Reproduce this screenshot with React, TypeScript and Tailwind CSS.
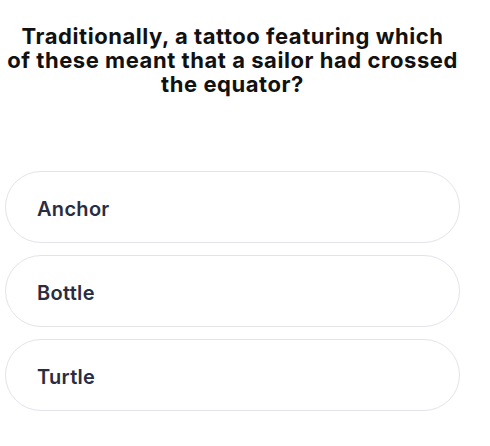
const options = ["Anchor", "Bottle", "Turtle"];

export default function App() {
  return (
    <div className="min-h-screen w-full bg-white" style={{ fontFamily: "Inter, 'Noto Sans', sans-serif" }}>
      <div className="w-[465px] flex flex-col items-center px-[5px]">
        <h1 className="pt-[24px] text-center text-[22px] leading-[24px] font-bold text-[#111111] tracking-[0.55px] whitespace-nowrap">
          Traditionally, a tattoo featuring which
          <br />
          of these meant that a sailor had crossed
          <br />
          the equator?
        </h1>
        <div className="mt-[75px] w-full flex flex-col gap-3">
          {options.map((opt) => (
            <button
              key={opt}
              className="h-[72px] w-full rounded-full border border-[#e3e3ec] bg-white text-left pl-[31px] pt-[3px] text-[20px] font-semibold tracking-[0.3px] text-[#2b2c3f]"
            >
              {opt}
            </button>
          ))}
        </div>
      </div>
    </div>
  );
}
